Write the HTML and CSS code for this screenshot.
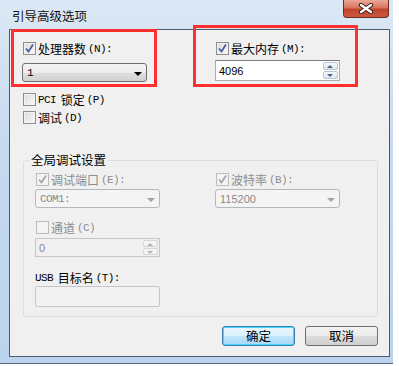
FILE: index.html
```html
<!DOCTYPE html>
<html lang="zh-CN">
<head>
    <meta charset="UTF-8">
    <title>引导高级选项</title>
    <link rel="stylesheet" href="styles.css">
</head>
<body>
    <div class="window">
        <div class="titlebar">
            <span class="title">引导高级选项</span>
            <span class="close">
                <svg width="16" height="11" viewBox="0 0 16 11">
                    <path d="M3 2 L13 9 M13 2 L3 9" stroke="#3b2320" stroke-width="4.2" stroke-linecap="round"/>
                    <path d="M3 2 L13 9 M13 2 L3 9" stroke="#fff" stroke-width="2.2" stroke-linecap="round"/>
                </svg>
            </span>
        </div>
        <div class="panel">
            <div class="top">
                <div class="col">
                    <label class="check"><span class="cb on"><svg width="11" height="11" viewBox="0 0 11 11"><path d="M2 5.5 L4.5 8.5 L9 1.5" fill="none" stroke="#4a5ea0" stroke-width="1.8"/></svg></span>处理器数<span class="en">(N):</span></label>
                    <div class="select"><span class="en">1</span><i class="arrow"></i></div>
                </div>
                <div class="col">
                    <label class="check"><span class="cb on"><svg width="11" height="11" viewBox="0 0 11 11"><path d="M2 5.5 L4.5 8.5 L9 1.5" fill="none" stroke="#4a5ea0" stroke-width="1.8"/></svg></span>最大内存<span class="en">(M):</span></label>
                    <div class="spin"><span class="num">4096</span><span class="spin-btns"><i class="up"></i><i class="down"></i></span></div>
                </div>
            </div>
            <label class="check pci"><span class="cb"></span><span class="en">PCI</span>&nbsp;锁定<span class="en">(P)</span></label>
            <label class="check debug"><span class="cb"></span>调试<span class="en">(D)</span></label>

            <fieldset class="group">
                <legend>全局调试设置</legend>
                <div class="gcols">
                    <div class="col">
                        <label class="check off"><span class="cb on"><svg width="11" height="11" viewBox="0 0 11 11"><path d="M2 5.5 L4.5 8.5 L9 1.5" fill="none" stroke="#a6a6a6" stroke-width="1.8"/></svg></span>调试端口<span class="en">(E):</span></label>
                        <div class="select dis"><span class="en">COM1:</span><i class="arrow"></i></div>
                    </div>
                    <div class="col">
                        <label class="check off"><span class="cb on"><svg width="11" height="11" viewBox="0 0 11 11"><path d="M2 5.5 L4.5 8.5 L9 1.5" fill="none" stroke="#a6a6a6" stroke-width="1.8"/></svg></span>波特率<span class="en">(B):</span></label>
                        <div class="select dis"><span class="num">115200</span><i class="arrow"></i></div>
                    </div>
                </div>
                <label class="check off channel"><span class="cb"></span>通道<span class="en">(C)</span></label>
                <div class="spin dis small"><span class="num">0</span><span class="spin-btns"><i class="up"></i><i class="down"></i></span></div>
                <div class="check usb"><span class="en">USB</span>&nbsp;目标名<span class="en">(T):</span></div>
                <div class="textbox"></div>
            </fieldset>

            <div class="buttons">
                <button class="btn default">确定</button>
                <button class="btn">取消</button>
            </div>
        </div>
    </div>
    <div class="mark mark-cpu"></div>
    <div class="mark mark-mem"></div>
</body>
</html>
```

FILE: styles.css
```css
body{
    margin: 0;
    background: #fff;
    font: 12px "Noto Sans CJK SC", sans-serif;
    color: #000;
}
.window{
    width: 393px;
    height: 364px;
    box-sizing: border-box;
    display: flex;
    flex-direction: column;
    background: linear-gradient(#dce8f5, #c6daef 40%, #bbd3ec);
    border-bottom: 1px solid #56667a;
}
.titlebar{
    flex: none;
    height: 29px;
    display: flex;
    justify-content: space-between;
    align-items: flex-start;
    padding: 0 4px 0 12px;
}
.title{
    font-size: 12.5px;
    line-height: 31px;
    color: #111;
}
.close{
    width: 46px;
    height: 18px;
    box-sizing: border-box;
    border: 1px solid #6d2a1f;
    border-top: none;
    border-radius: 0 0 4px 4px;
    background: linear-gradient(#eba997, #d9755f 45%, #c2432b 55%, #cc5a3f);
    display: flex;
    align-items: center;
    justify-content: center;
}
.panel{
    flex: 1;
    margin: 0 3px 6px 9px;
    border: 1px solid #4c5a6c;
    background: #f0f0f0;
    padding: 11px 11px 0 12px;
}
.en{
    font-family: "Liberation Mono", monospace;
    font-size: 11px;
    letter-spacing: -0.6px;
}
.num{
    font-family: "Liberation Sans", sans-serif;
    font-size: 11px;
}
.top{
    display: grid;
    grid-template-columns: 193px 125px;
}
.col{
    display: flex;
    flex-direction: column;
}
.check{
    display: flex;
    align-items: center;
    height: 15px;
    gap: 2px;
    white-space: nowrap;
}
.check.off{
    color: #8d8d8d;
}
.cb{
    flex: none;
    width: 13px;
    height: 13px;
    box-sizing: border-box;
    margin-left: 1px;
    border: 1px solid #8e8f8f;
    background: linear-gradient(135deg, #dadada, #fbfbfb);
    box-shadow: inset 0 0 0 1px #f2f2f2;
    display: inline-flex;
    align-items: center;
    justify-content: center;
}
.off .cb{
    border-color: #bcbcbc;
    background: #f4f4f4;
}
.select{
    margin-top: 7px;
    width: 125px;
    height: 19px;
    box-sizing: border-box;
    border: 1px solid #707070;
    border-radius: 3px;
    background: linear-gradient(#f3f3f3, #ececec 50%, #dedede 51%, #d2d2d2);
    display: flex;
    align-items: center;
    justify-content: space-between;
    padding: 0 4px 0 4px;
}
.arrow{
    width: 0;
    height: 0;
    border-left: 4px solid transparent;
    border-right: 4px solid transparent;
    border-top: 4px solid #000;
    margin-top: 2px;
}
.select.dis{
    margin-top: 2px;
    border-color: #b4b8bb;
    background: #f4f4f4;
    color: #8a8a8a;
}
.select.dis .arrow{
    border-top-color: #a3a3a3;
}
.spin{
    margin-top: 4px;
    width: 125px;
    height: 21px;
    box-sizing: border-box;
    border: 1px solid #abadb3;
    border-top-color: #7b7d83;
    background: #fff;
    display: flex;
    align-items: center;
    justify-content: space-between;
    padding-left: 3px;
}
.spin-btns{
    align-self: stretch;
    width: 15px;
    display: flex;
    flex-direction: column;
    gap: 1px;
    padding: 1px;
}
.spin-btns i{
    flex: 1;
    border: 1px solid #b8c4d2;
    border-radius: 2px;
    background: linear-gradient(#f6f9fc, #dde6ef);
    position: relative;
}
.spin-btns i::after{
    content: "";
    position: absolute;
    left: 3px;
    top: 2px;
    border-left: 3px solid transparent;
    border-right: 3px solid transparent;
}
.spin-btns .up::after{
    border-bottom: 3px solid #4d6185;
}
.spin-btns .down::after{
    border-top: 3px solid #4d6185;
}
.spin.dis{
    background: #f0f0f0;
    border-color: #c3c6ca;
    color: #8a8a8a;
}
.spin.dis .spin-btns i{
    border-color: #d4d6d8;
    background: #f4f4f4;
}
.spin.dis .spin-btns i::after{
    border-top-color: #b0b0b0;
    border-bottom-color: #b0b0b0;
}
.spin.small{
    margin-top: 3px;
    height: 19px;
}
.pci{
    margin-top: 10px;
}
.debug{
    margin-top: 3px;
}
.group{
    margin: 27px 0 0 1px;
    width: 355px;
    box-sizing: border-box;
    border: 1px solid #d5dfe5;
    border-radius: 3px;
    padding: 4px 11px 9px 11px;
}
.group legend{
    margin-left: -6px;
    padding: 0 2px;
    line-height: 16px;
    font-size: 12.5px;
}
.gcols{
    display: grid;
    grid-template-columns: 180px 125px;
}
.channel{
    margin-top: 12px;
}
.usb{
    margin-top: 13px;
}
.textbox{
    margin-top: 1px;
    width: 125px;
    height: 21px;
    box-sizing: border-box;
    border: 1px solid #c3c6ca;
    border-radius: 2px;
    background: #f2f2f2;
}
.buttons{
    margin-top: 9px;
    display: flex;
    justify-content: flex-end;
    gap: 10px;
}
.btn{
    width: 73px;
    height: 20px;
    box-sizing: border-box;
    border: 1px solid #707070;
    border-radius: 3px;
    background: linear-gradient(#f2f2f2, #ebebeb 50%, #dddddd 51%, #cfcfcf);
    font: 12.5px "Noto Sans CJK SC", sans-serif;
    color: #000;
    padding: 0;
    line-height: 16px;
}
.btn.default{
    border-color: #3c7fb1;
    background: linear-gradient(#eaf6fd, #d9f0fc 50%, #bee6fd 51%, #a7d9f5);
    box-shadow: inset 0 0 0 1px #48d6f8;
}
.mark{
    position: absolute;
    border: 3px solid #ff2f2f;
    box-sizing: border-box;
}
.mark-cpu{
    left: 11px;
    top: 29px;
    width: 146px;
    height: 58px;
}
.mark-mem{
    left: 193px;
    top: 25px;
    width: 165px;
    height: 62px;
}
```
